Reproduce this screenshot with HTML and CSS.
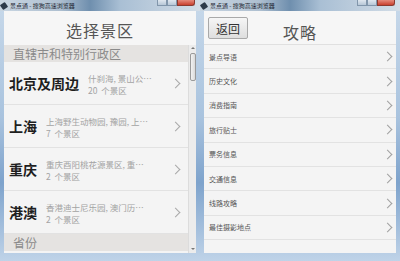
FILE: index.html
```html
<!DOCTYPE html>
<html lang="zh-CN">
<head>
    <meta charset="UTF-8">
    <meta name="viewport" content="width=device-width, initial-scale=1.0">
    <title>景点通</title>
    <link rel="stylesheet" href="styles.css">
</head>
<body>
    <div class="desktop">
        <!-- Left window: spot picker -->
        <div class="window">
            <div class="titlebar">
                <span class="app-icon"></span>
                <span class="title-text">景点通 - 搜狗高速浏览器</span>
                <div class="caption-btns">
                    <span class="cap-btn"></span>
                    <span class="cap-btn"></span>
                    <span class="cap-btn close"></span>
                </div>
            </div>
            <div class="client">
                <header class="page-head">
                    <h1>选择景区</h1>
                </header>
                <div class="scroll-wrap">
                    <div class="list">
                        <div class="section">直辖市和特别行政区</div>

                        <div class="spot">
                            <span class="spot-name">北京及周边</span>
                            <div class="spot-info">
                                <span>什刹海, 景山公…</span>
                                <span>20&nbsp; 个景区</span>
                            </div>
                            <span class="chev"></span>
                        </div>
                        <div class="spot">
                            <span class="spot-name">上海</span>
                            <div class="spot-info">
                                <span>上海野生动物园, 豫园, 上…</span>
                                <span>7&nbsp; 个景区</span>
                            </div>
                            <span class="chev"></span>
                        </div>
                        <div class="spot">
                            <span class="spot-name">重庆</span>
                            <div class="spot-info">
                                <span>重庆酉阳桃花源景区, 重…</span>
                                <span>2&nbsp; 个景区</span>
                            </div>
                            <span class="chev"></span>
                        </div>
                        <div class="spot">
                            <span class="spot-name">港澳</span>
                            <div class="spot-info">
                                <span>香港迪士尼乐园, 澳门历…</span>
                                <span>2&nbsp; 个景区</span>
                            </div>
                            <span class="chev"></span>
                        </div>

                        <div class="section">省份</div>
                    </div>
                    <div class="scrollbar">
                        <span class="arrow up"></span>
                        <span class="thumb"></span>
                        <span class="arrow down"></span>
                    </div>
                </div>
            </div>
        </div>

        <!-- Right window: guide menu -->
        <div class="window">
            <div class="titlebar">
                <span class="app-icon"></span>
                <span class="title-text">景点通 - 搜狗高速浏览器</span>
                <div class="caption-btns">
                    <span class="cap-btn"></span>
                    <span class="cap-btn"></span>
                    <span class="cap-btn close"></span>
                </div>
            </div>
            <div class="client">
                <header class="page-head guide-head">
                    <button class="back-btn">返回</button>
                    <h1>攻略</h1>
                </header>
                <ul class="menu">
                    <li>景点导语<span class="chev"></span></li>
                    <li>历史文化<span class="chev"></span></li>
                    <li>消费指南<span class="chev"></span></li>
                    <li>旅行贴士<span class="chev"></span></li>
                    <li>票务信息<span class="chev"></span></li>
                    <li>交通信息<span class="chev"></span></li>
                    <li>线路攻略<span class="chev"></span></li>
                    <li>最佳摄影地点<span class="chev"></span></li>
                </ul>
            </div>
        </div>
    </div>
</body>
</html>
```

FILE: styles.css
```css
body {
    margin: 0;
    padding: 0;
    width: 400px;
    height: 261px;
    overflow: hidden;
    font-family: "Noto Sans CJK SC", "Noto Sans", sans-serif;
    background: #4d77a6;
}

.desktop {
    display: flex;
    height: 261px;
}

/* window frame */
.window {
    width: 200px;
    height: 261px;
    display: flex;
    flex-direction: column;
    background: linear-gradient(180deg, #c8d9ea 0%, #a9c3de 45%, #7ea3cc 70%, #bfd3e8 100%);
    box-sizing: border-box;
    padding: 0 4px 8px;
    overflow: hidden;
}

.titlebar {
    height: 11px;
    margin: 0 -4px;
    padding: 0 4px;
    display: flex;
    align-items: center;
    position: relative;
    background: linear-gradient(90deg, #c9d6e2 0%, #aebfd0 30%, #6f8fae 45%, #a9bfd4 60%, #d3dde7 100%);
}

.app-icon {
    width: 6px;
    height: 6px;
    margin-left: -3px;
    background: #2c3a4a;
    border-radius: 1px;
    transform: rotate(-35deg);
}

.title-text {
    font-size: 6px;
    color: #1c2530;
    margin-left: 3px;
    line-height: 11px;
    white-space: nowrap;
}

.caption-btns {
    position: absolute;
    top: 0;
    right: 5px;
    display: flex;
}

.cap-btn {
    width: 10px;
    height: 6px;
    background: linear-gradient(180deg, #dfe7ef, #b7c7d7);
    border: 1px solid #8196ab;
    border-top: none;
    box-sizing: border-box;
}

.cap-btn.close {
    width: 18px;
    background: linear-gradient(180deg, #e58a7c, #c9402f);
    border-color: #8c3a30;
    border-radius: 0 0 3px 0;
}

.client {
    flex: 1;
    display: flex;
    flex-direction: column;
    background: #f4f4f4;
    overflow: hidden;
}

.page-head {
    height: 34px;
    flex-shrink: 0;
    box-sizing: border-box;
    padding-top: 4px;
    display: flex;
    align-items: center;
    justify-content: center;
    background: #f6f6f6;
}

.page-head h1 {
    margin: 0;
    font-size: 16px;
    font-weight: normal;
    color: #555;
    letter-spacing: 1px;
}

/* left list with scrollbar */
.scroll-wrap {
    flex: 1;
    display: flex;
    overflow: hidden;
}

.list {
    flex: 1;
}

.section {
    height: 17px;
    line-height: 17px;
    padding-left: 9px;
    font-size: 12px;
    color: #8a8a8a;
    background: #e5e3e1;
}

.spot {
    height: 43px;
    box-sizing: border-box;
    border-bottom: 1px solid #e2e2e2;
    display: flex;
    align-items: center;
    padding: 0 9px 0 5px;
}

.spot-name {
    font-size: 14px;
    font-weight: bold;
    color: #1e1e1e;
    margin-right: 9px;
    white-space: nowrap;
}

.spot-info {
    flex: 1;
    display: flex;
    flex-direction: column;
    font-size: 8.5px;
    line-height: 12px;
    color: #a3a3a3;
    white-space: nowrap;
    overflow: hidden;
    margin-top: 2px;
}

.chev {
    width: 6px;
    height: 6px;
    border-top: 1.5px solid #a8a8a8;
    border-right: 1.5px solid #a8a8a8;
    transform: rotate(45deg);
    margin-left: auto;
    flex-shrink: 0;
}

.scrollbar {
    width: 7px;
    background: #ececec;
    border-left: 1px solid #dcdcdc;
    display: flex;
    flex-direction: column;
    align-items: center;
}

.arrow {
    width: 0;
    height: 0;
    border-left: 2px solid transparent;
    border-right: 2px solid transparent;
    margin: 2px 0;
}

.arrow.up {
    border-bottom: 2px solid #777;
}

.arrow.down {
    border-top: 2px solid #777;
    margin-top: auto;
    margin-bottom: 3px;
}

.thumb {
    width: 6px;
    height: 28px;
    margin-top: 2px;
    box-sizing: border-box;
    border: 1px solid #9a9a9a;
    border-radius: 2px;
    background: linear-gradient(90deg, #f2f2f2, #dadada);
}

/* right guide page */
.guide-head {
    display: grid;
    grid-template-columns: 1fr auto 1fr;
    align-items: start;
    padding-top: 0;
    border-bottom: 1px solid #e0e0e0;
}

.guide-head h1 {
    margin-top: 9px;
}

.back-btn {
    justify-self: start;
    width: 40px;
    height: 22px;
    margin: 6px 0 0 4px;
    padding: 0;
    font-family: inherit;
    font-size: 12px;
    color: #333;
    background: linear-gradient(180deg, #f6f6f6, #dedede);
    border: 1px solid #a9a9a9;
    border-radius: 2px;
}

.menu {
    list-style: none;
    margin: 0;
    padding: 0;
}

.menu li {
    height: 24.4px;
    box-sizing: border-box;
    border-bottom: 1px solid #e2e2e2;
    display: flex;
    align-items: center;
    padding: 0 5px 0 5px;
    font-size: 7px;
    color: #555;
}

.menu .chev {
    width: 6px;
    height: 6px;
    border-color: #a0a0a0;
}
```
